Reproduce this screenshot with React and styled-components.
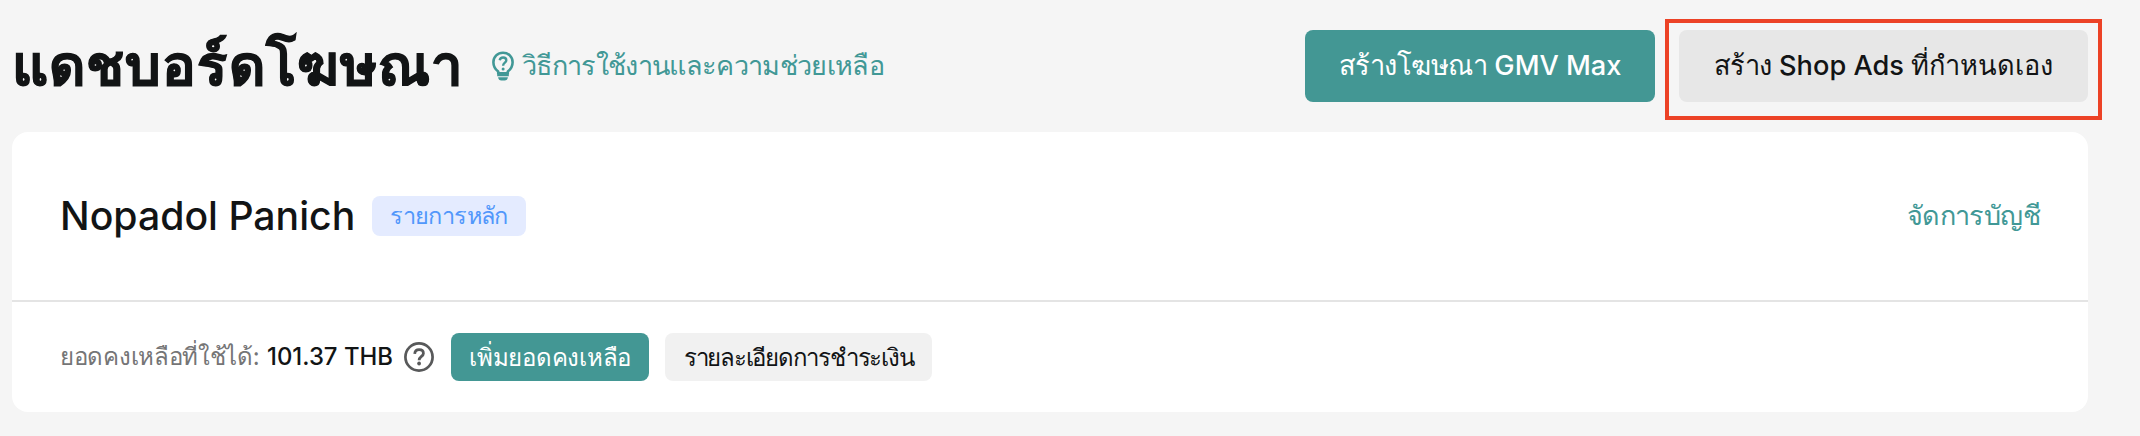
import React from 'react';
import styled, { createGlobalStyle } from 'styled-components';

const GlobalStyle = createGlobalStyle`
  * { box-sizing: border-box; }
  body {
    margin: 0;
    background: #f5f5f5;
    color: #121415;
    font-family: Inter, "Noto Sans", sans-serif;
  }
`;

const Page = styled.main`
  height: 436px;
  padding: 30px 52px 24px 12px;
  white-space: nowrap;
`;

const Header = styled.header`
  display: flex;
  align-items: center;
  height: 72px;
  margin-bottom: 30px;
`;

const Title = styled.h1`
  margin: 0;
  padding-bottom: 3px;
  width: 479px;
  font-size: 56px;
  font-weight: 700;
  line-height: 66px;
  letter-spacing: 1.1px;
  -webkit-text-stroke: 1px currentColor;
`;

const HelpLink = styled.a`
  display: flex;
  align-items: center;
  gap: 8px;
  padding-bottom: 1px;
  color: #419896;
  font-size: 27px;
  letter-spacing: -0.66px;
  line-height: 40px;
`;

const Actions = styled.div`
  display: flex;
  gap: 24px;
  margin-left: auto;
`;

const Button = styled.button`
  display: flex;
  align-items: center;
  justify-content: center;
  width: ${(p) => p.$width}px;
  height: ${(p) => (p.$small ? 48 : 72)}px;
  padding: 0 0 ${(p) => (p.$small ? 0 : 2)}px;
  border: 0;
  border-radius: 8px;
  background: ${(p) => p.$bg};
  color: ${(p) => p.$color || '#121415'};
  font-family: inherit;
  font-size: ${(p) => (p.$small ? 24 : 27.2)}px;
  font-weight: 550;
  letter-spacing: ${(p) => p.$spacing || 0}px;
  white-space: pre;
`;

const Highlight = styled.div`
  position: relative;

  &::after {
    content: '';
    position: absolute;
    inset: -11px -14px -18px;
    border: 4px solid #ec4226;
    pointer-events: none;
  }
`;

const Tight = styled.span`
  letter-spacing: -0.5px;
`;

const Card = styled.section`
  height: 280px;
  border-radius: 16px;
  background: #fff;
`;

const AccountRow = styled.div`
  display: flex;
  align-items: center;
  height: 170px;
  padding: 0 48px 0 48px;
  border-bottom: 2px solid #e4e4e4;
`;

const AccountName = styled.h2`
  margin: 0;
  width: 312px;
  font-size: 39.2px;
  font-weight: 550;
  line-height: 48px;
`;

const Tag = styled.span`
  width: 154px;
  height: 40px;
  border-radius: 8px;
  background: #e4ebff;
  color: #5197fb;
  font-size: 23.5px;
  letter-spacing: -0.6px;
  line-height: 39px;
  text-align: center;
`;

const ManageLink = styled.a`
  margin-left: auto;
  color: #419896;
  font-size: 27px;
  letter-spacing: -0.6px;
  line-height: 40px;
`;

const BalanceRow = styled.div`
  display: flex;
  align-items: center;
  height: 110px;
  padding: 0 48px 0 48px;
`;

const Label = styled.span`
  width: 207px;
  color: #757576;
  font-size: 24px;
  letter-spacing: -0.3px;
  line-height: 36px;
`;

const Amount = styled.span`
  width: 137px;
  font-size: 23.9px;
  font-weight: 550;
  line-height: 36px;
`;

const BalanceActions = styled.div`
  display: flex;
  gap: 16px;
  margin-left: 17px;
`;

const BulbIcon = () => (
  <svg width="23" height="30" viewBox="-1 0 23 30" fill="none" stroke="currentColor">
    <path d="M6.2 22.2V20.6C3.2 18.2 1.4 15 1.4 11.2C1.4 5.8 5.7 1.7 11 1.7S20.6 5.8 20.6 11.2C20.6 15 18.8 18.2 15.8 20.6V22.2Z" strokeWidth="2.6" strokeLinejoin="round" />
    <path d="M7.7 9.3C8 7.4 9.2 6.5 11.1 6.5C13 6.5 14.3 7.6 14.3 9.3C14.3 11.6 11.1 11.8 11.1 14.7" strokeWidth="2.4" />
    <circle cx="11.1" cy="17.9" r="1.5" fill="currentColor" stroke="none" />
    <path d="M5.2 22H16.8V25.2H5.2ZM6.1 26.2H15.9C15.6 28.4 14.4 29.5 12.7 29.5H9.3C7.6 29.5 6.4 28.4 6.1 26.2Z" fill="currentColor" stroke="none" />
  </svg>
);

const HelpIcon = () => (
  <svg width="30" height="30" viewBox="0 0 30 30" fill="none" stroke="#58595a">
    <circle cx="15" cy="15" r="13.6" strokeWidth="2.7" />
    <path d="M10.7 11.8C11 9 12.6 7.7 15.1 7.7C17.7 7.7 19.4 9.2 19.4 11.4C19.4 14.3 15.1 14.4 15.1 18.2" strokeWidth="2.8" />
    <circle cx="15.1" cy="21.5" r="1.9" fill="#58595a" stroke="none" />
  </svg>
);

export default function App() {
  return (
    <>
      <GlobalStyle />
      <Page>
        <Header>
          <Title>แดชบอร์ดโฆษณา</Title>
          <HelpLink>
            <BulbIcon />
            <span>วิธีการใช้งานและความช่วยเหลือ</span>
          </HelpLink>
          <Actions>
            <Button $width={350} $bg="#439794" $color="#fff">
              <Tight>สร้างโฆษณา</Tight> GMV Max
            </Button>
            <Highlight>
              <Button $width={409} $bg="#e7e7e7">
                <Tight>สร้าง</Tight> Shop Ads ที่กำหนดเอง
              </Button>
            </Highlight>
          </Actions>
        </Header>
        <Card>
          <AccountRow>
            <AccountName>Nopadol Panich</AccountName>
            <Tag>รายการหลัก</Tag>
            <ManageLink>จัดการบัญชี</ManageLink>
          </AccountRow>
          <BalanceRow>
            <Label>ยอดคงเหลือที่ใช้ได้:</Label>
            <Amount>101.37 THB</Amount>
            <HelpIcon />
            <BalanceActions>
              <Button $small $width={198} $bg="#439794" $color="#fff" $spacing={-0.25}>
                เพิ่มยอดคงเหลือ
              </Button>
              <Button $small $width={267} $bg="#f1f1f1" $spacing={-1.25}>
                รายละเอียดการชำระเงิน
              </Button>
            </BalanceActions>
          </BalanceRow>
        </Card>
      </Page>
    </>
  );
}
